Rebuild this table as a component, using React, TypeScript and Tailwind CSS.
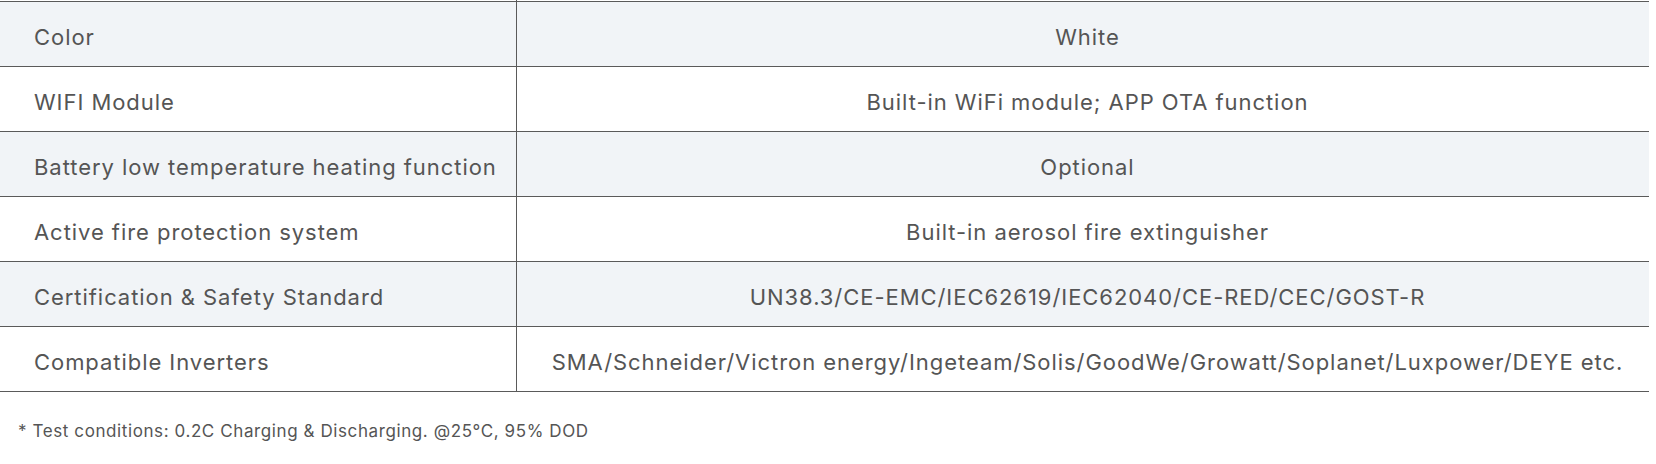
const rows: [string, string][] = [
  ['Weight', '—'],
  ['Color', 'White'],
  ['WIFI Module', 'Built-in WiFi module; APP OTA function'],
  ['Battery low temperature heating function', 'Optional'],
  ['Active fire protection system', 'Built-in aerosol fire extinguisher'],
  ['Certification & Safety Standard', 'UN38.3/CE-EMC/IEC62619/IEC62040/CE-RED/CEC/GOST-R'],
  ['Compatible Inverters', 'SMA/Schneider/Victron energy/Ingeteam/Solis/GoodWe/Growatt/Soplanet/Luxpower/DEYE etc.'],
];

export default function App() {
  return (
    <div className="w-[1656px] h-[464px] overflow-hidden bg-white font-['Inter',sans-serif] text-[#555555]">
      {/* first row is the tail of the previous section, scrolled off */}
      <div className="w-[1649px] -mt-[63px]">
        {rows.map(([label, value], i) => (
          <div
            key={label}
            className={`flex h-[65px] border-b border-[#5a5a5a] text-[22px] tracking-[0.043em] ${i % 2 === 1 ? 'bg-[#f1f4f7]' : 'bg-white'}`}
          >
            <div className="w-[517px] shrink-0 border-r border-[#5a5a5a] flex items-center pl-[34px] pt-[7px]">
              {i === 0 ? '' : label}
            </div>
            <div className="flex-1 flex items-center justify-center pl-[9px] pt-[7px]">
              {i === 0 ? '' : value}
            </div>
          </div>
        ))}
      </div>
      <p className="mt-[31px] pl-[18px] text-[17px] leading-none tracking-[0.035em]">
        * Test conditions: 0.2C Charging &amp; Discharging. @25°C, 95% DOD
      </p>
    </div>
  );
}
